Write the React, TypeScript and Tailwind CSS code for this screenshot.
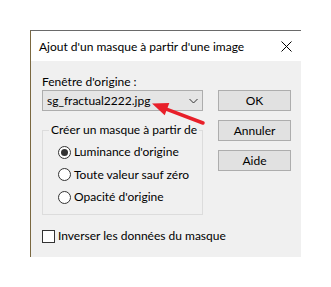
import React from "react";

const font = { fontFamily: 'Lato, "Noto Sans", "Liberation Sans", sans-serif' };

function Radio({ checked, label }: { checked?: boolean; label: string }) {
  return (
    <div className="flex items-center h-[22.5px]">
      <span className="w-[13px] h-[13px] rounded-full border border-[#333] bg-white flex items-center justify-center">
        {checked && <span className="w-[7px] h-[7px] rounded-full bg-[#333]" />}
      </span>
      <span className="ml-[3px]">{label}</span>
    </div>
  );
}

function Button({ children }: { children: React.ReactNode }) {
  return (
    <div className="w-[73px] h-[21px] border border-[#adadad] bg-[#e1e1e1] flex items-center justify-center">
      {children}
    </div>
  );
}

export default function App() {
  return (
    <div
      className="relative w-[331px] h-[287px] bg-white pt-[30px] pl-[30px] text-[12px] leading-[16px] text-black"
      style={font}
    >
      <div className="w-[271px] h-[227px] border-l border-t border-l-[#7a6840] border-t-[#6a6a6a] flex flex-col">
        {/* title bar */}
        <div className="h-[30px] bg-white flex items-center justify-between pl-[8px] pr-[9px] pt-[1px]">
          <span>Ajout d'un masque à partir d'une image</span>
          <svg width="11" height="11" viewBox="0 0 11 11">
            <path d="M0.5 0.5 L10.5 10.5 M10.5 0.5 L0.5 10.5" stroke="#000" strokeWidth="1" />
          </svg>
        </div>

        {/* body */}
        <div className="flex-1 bg-[#f0f0f0] pl-[11px] pt-[13px]">
          <div>Fenêtre d'origine :</div>
          <div className="flex">
            <div className="w-[161px] flex flex-col">
              <div className="h-[21px] border border-[#adadad] bg-[#e5e5e5] flex items-center justify-between pl-[4px] pr-[4px]">
                <span>sg_fractual2222.jpg</span>
                <svg width="9" height="6" viewBox="0 0 9 6">
                  <path d="M0.5 1 L4.5 5 L8.5 1" stroke="#333" strokeWidth="1" fill="none" />
                </svg>
              </div>
              <fieldset className="mt-[11px] h-[93px] border border-[#dcdcdc]">
                <legend className="ml-[6px] px-[2px] whitespace-nowrap">Créer un masque à partir de</legend>
                <div className="pl-[15px] mt-[3px]">
                  <Radio checked label="Luminance d'origine" />
                  <Radio label="Toute valeur sauf zéro" />
                  <Radio label="Opacité d'origine" />
                </div>
              </fieldset>
              <div className="flex items-center mt-[13px] whitespace-nowrap">
                <span className="w-[13px] h-[13px] border border-[#333] bg-white shrink-0" />
                <span className="ml-[3px]">Inverser les données du masque</span>
              </div>
            </div>
            <div className="ml-[15px] flex flex-col gap-[9px]">
              <Button>OK</Button>
              <Button>Annuler</Button>
              <Button>Aide</Button>
            </div>
          </div>
        </div>
      </div>

      {/* red annotation arrow */}
      <svg className="absolute inset-0 pointer-events-none" width="331" height="287">
        <line x1="203" y1="123" x2="165" y2="108.6" stroke="#e8202a" strokeWidth="3.5" strokeLinecap="round" />
        <polygon points="152,103.5 169.3,103.1 164.7,115.3" fill="#e8202a" />
      </svg>
    </div>
  );
}
